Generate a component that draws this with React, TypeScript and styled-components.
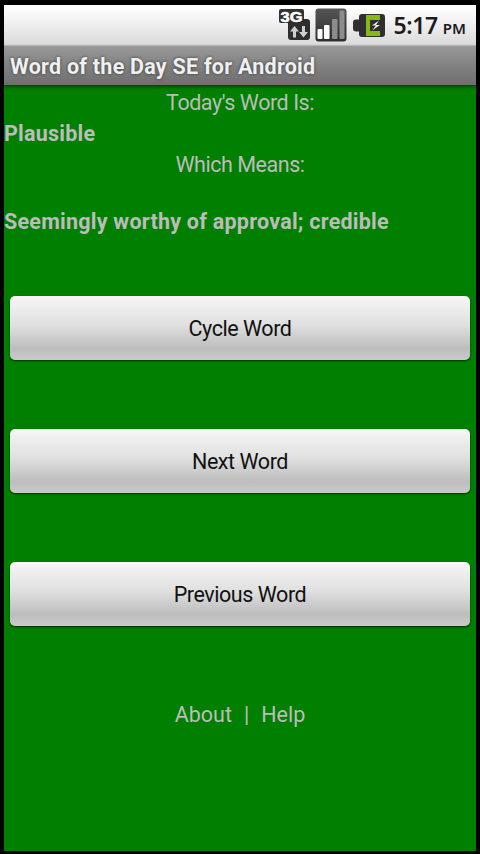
import React from "react";
import styled, { createGlobalStyle } from "styled-components";

const GlobalStyle = createGlobalStyle`
  html, body {
    margin: 0;
    padding: 0;
    background: #000;
  }
  body {
    font-family: Roboto, "Noto Sans", sans-serif;
  }
`;

const Frame = styled.div`
  width: 480px;
  height: 854px;
  box-sizing: border-box;
  padding: 5px 4px 3px 4px;
  background: #000;
  display: flex;
  flex-direction: column;
  overflow: hidden;
`;

const StatusBar = styled.div`
  height: 40px;
  flex: none;
  display: flex;
  align-items: center;
  padding-right: 10px;
  justify-content: flex-end;
  background: linear-gradient(#ffffff 0%, #f4f4f4 35%, #e0e0e0 85%, #dadada 100%);
`;

const IconSlot = styled.span<{ $gap: number }>`
  display: flex;
  margin-right: ${(p) => p.$gap}px;
`;

const Clock = styled.span`
  font-family: "Noto Sans", sans-serif;
  font-size: 23px;
  font-weight: 600;
  color: #1c1c1c;
  line-height: 1;
  letter-spacing: -0.4px;
`;

const Meridiem = styled.span`
  font-size: 15px;
  font-weight: 600;
  margin-left: 5px;
  letter-spacing: 0;
`;

const TitleBar = styled.div`
  height: 40px;
  flex: none;
  box-sizing: border-box;
  display: flex;
  align-items: center;
  padding: 1px 0 0 6px;
  background: linear-gradient(#999999, #808080 55%, #6e6e6e);
  border-top: 1px solid #b5b5b5;
  box-shadow: 0 2px 3px rgba(0, 0, 0, 0.45);
  position: relative;
  color: #f0f0f0;
  font-size: 21.5px;
  font-weight: 700;
  letter-spacing: 0.24px;
  white-space: nowrap;
  text-shadow: 0 0 3px #333;
`;

const Content = styled.div`
  flex: 1;
  background: #007f00;
  display: flex;
  flex-direction: column;
  color: #bcbcbc;
  font-size: 21.5px;
`;

const CenterLine = styled.div<{ $top?: number }>`
  text-align: center;
  line-height: 30px;
  letter-spacing: -0.45px;
  margin-top: ${(p) => p.$top ?? 0}px;
`;

const BoldLine = styled.div<{ $top?: number }>`
  font-weight: 700;
  line-height: 30px;
  letter-spacing: 0.24px;
  margin-top: ${(p) => p.$top ?? 0}px;
  white-space: nowrap;
`;

const ButtonList = styled.div`
  display: flex;
  flex-direction: column;
  gap: 69px;
  padding: 0 6px;
  margin-top: 59px;
`;

const WordButton = styled.button`
  height: 64px;
  border: none;
  border-radius: 5px;
  background: linear-gradient(#f6f6f6 0%, #e0e0e0 45%, #bdbdbd 82%, #cacaca 100%);
  box-shadow: 0 1px 2px rgba(0, 0, 0, 0.65);
  color: #111;
  font-family: inherit;
  font-size: 21.5px;
  letter-spacing: -0.45px;
  padding: 0;
`;

const FooterLinks = styled.div`
  display: flex;
  justify-content: center;
  gap: 12px;
  margin-top: 74px;
  line-height: 30px;
`;

const NetworkIcon = () => (
  <svg width="32" height="32" viewBox="0 0 32 32">
    <rect x="0" y="0" width="25" height="14" rx="2" fill="#333" />
    <rect x="9" y="10" width="22" height="21" rx="3" fill="#2e2e2e" />
    <text
      x="1.500"
      y="12.500"
      fontFamily="Liberation Sans, sans-serif"
      fontWeight="700"
      fontSize="15"
      fill="#fff"
      stroke="#fff"
      strokeWidth="0.5"
      textLength="22"
      lengthAdjust="spacingAndGlyphs"
    >
      3G
    </text>
    <path d="M14 28.500v-6h-3l4.500-5.500 4.500 5.500h-3v6z" fill="#cfcfcf" />
    <path d="M23 17v6h-3l4.500 5.500 4.500-5.500h-3v-6z" fill="#cfcfcf" />
  </svg>
);

const SignalIcon = () => (
  <svg width="32" height="34" viewBox="0 0 32 34">
    <defs>
      <linearGradient id="signalBg" x1="0" y1="0" x2="0" y2="1">
        <stop offset="0" stopColor="#555" />
        <stop offset="1" stopColor="#2e2e2e" />
      </linearGradient>
    </defs>
    <rect x="0.500" y="0.500" width="31" height="33" rx="3" fill="url(#signalBg)" />
    <rect x="2.500" y="21" width="5" height="10" rx="1" fill="#fff" />
    <rect x="9" y="17" width="5.500" height="14" rx="1" fill="#fff" />
    <rect x="17" y="11" width="5.500" height="20" rx="1" fill="#8c8c8c" />
    <rect x="24.500" y="2.500" width="5" height="28.500" rx="1" fill="#8c8c8c" />
  </svg>
);

const BatteryIcon = () => (
  <svg width="32" height="23" viewBox="0 0 32 23">
    <path
      d="M9 0h20a3 3 0 0 1 3 3v17a3 3 0 0 1-3 3H9a3 3 0 0 1-3-3v-2.500H3a3 3 0 0 1-3-3V8.500a3 3 0 0 1 3-3h3V3a3 3 0 0 1 3-3z"
      fill="#2f2f2f"
    />
    <path d="M13 1h14v5H17v11h10v5H13z" fill="#86b817" />
    <path d="M26 6.500l-7 5h4l-4 5 8-5.500h-4l3-4.500z" fill="#f4f4f4" />
  </svg>
);

function App() {
  return (
    <>
      <GlobalStyle />
      <Frame>
        <StatusBar>
          <IconSlot $gap={4}>
            <NetworkIcon />
          </IconSlot>
          <IconSlot $gap={6}>
            <SignalIcon />
          </IconSlot>
          <IconSlot $gap={9}>
            <BatteryIcon />
          </IconSlot>
          <Clock>
            5:17<Meridiem>PM</Meridiem>
          </Clock>
        </StatusBar>
        <TitleBar>Word of the Day SE for Android</TitleBar>
        <Content>
          <CenterLine $top={3}>Today's Word Is:</CenterLine>
          <BoldLine $top={1}>Plausible</BoldLine>
          <CenterLine $top={1}>Which Means:</CenterLine>
          <BoldLine $top={27}>Seemingly worthy of approval; credible</BoldLine>
          <ButtonList>
            <WordButton>Cycle Word</WordButton>
            <WordButton>Next Word</WordButton>
            <WordButton>Previous Word</WordButton>
          </ButtonList>
          <FooterLinks>
            <span>About</span>
            <span>|</span>
            <span>Help</span>
          </FooterLinks>
        </Content>
      </Frame>
    </>
  );
}

export default App;
